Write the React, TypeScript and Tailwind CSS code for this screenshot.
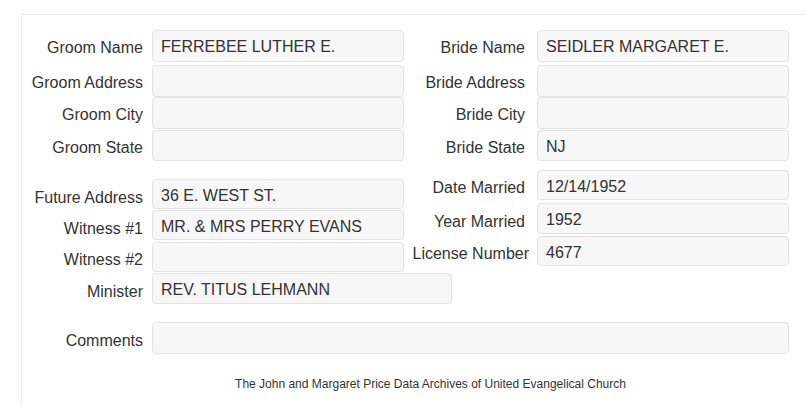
import React from "react";

// Marriage record detail form (read-only view)

interface FieldProps {
  label: string;
  value?: string;
  gap?: string;
  inputWidth?: string;
  height?: string;
  className?: string;
  labelClass?: string;
  valueClass?: string;
}

function Field({
  label,
  value = "",
  gap = "gap-[9px]",
  inputWidth = "w-[252px]",
  height = "h-[32px]",
  className = "",
  labelClass = "w-[121px] pt-[4px]",
  valueClass = "pt-[2px]",
}: FieldProps) {
  return (
    <div className={`flex items-center ${gap} ${className}`}>
      <div className={`shrink-0 text-right whitespace-nowrap ${labelClass}`}>{label}</div>
      <div
        className={`${inputWidth} ${height} ${valueClass} shrink-0 flex items-center px-[8px] rounded-[4px] border border-[#e3e3e3] bg-[#f7f7f7] whitespace-nowrap`}
      >
        {value}
      </div>
    </div>
  );
}

export default function App() {
  return (
    <div
      className="w-[805px] h-[405px] overflow-hidden bg-white text-[16px] leading-[20px] text-[#333]"
      style={{ fontFamily: '"Liberation Sans", Arial, sans-serif' }}
    >
      <div className="ml-[21px] mt-[14px] w-[818px] h-[400px] border-l border-t border-[#e8e8e8] pt-[15px]">
        {/* Groom / Bride */}
        <div className="flex">
          <div className="w-[382px] flex flex-col">
            <Field label="Groom Name" value="FERREBEE LUTHER E." />
            <Field label="Groom Address" className="mt-[3px]" />
            <Field label="Groom City" />
            <Field label="Groom State" className="mt-[1px]" height="h-[31px]" />
          </div>
          <div className="flex flex-col">
            <Field label="Bride Name" value="SEIDLER MARGARET E." gap="gap-[12px]" />
            <Field label="Bride Address" gap="gap-[12px]" className="mt-[3px]" />
            <Field label="Bride City" gap="gap-[12px]" />
            <Field label="Bride State" value="NJ" gap="gap-[12px]" className="mt-[1px]" height="h-[31px]" />
          </div>
        </div>

        {/* Witnesses / Marriage details */}
        <div className="flex">
          <div className="w-[382px] flex flex-col pt-[18px]">
            <Field
              label="Future Address"
              value="36 E. WEST ST."
              height="h-[30px]"
              labelClass="w-[121px] pt-[7px]"
              valueClass="pt-[3px]"
            />
            <Field
              label="Witness #1"
              value="MR. & MRS PERRY EVANS"
              height="h-[30px]"
              className="mt-[1px]"
              labelClass="w-[121px] pt-[7px]"
              valueClass="pt-[3px]"
            />
            <Field
              label="Witness #2"
              height="h-[30px]"
              className="mt-[2px]"
              labelClass="w-[121px] pt-[5px]"
              valueClass="pt-[3px]"
            />
            <Field
              label="Minister"
              value="REV. TITUS LEHMANN"
              inputWidth="w-[300px]"
              height="h-[31px]"
              className="mt-[1px]"
              labelClass="w-[121px] pt-[6px]"
              valueClass="pt-[3px]"
            />
          </div>
          <div className="flex flex-col pt-[9px]">
            <Field
              label="Date Married"
              value="12/14/1952"
              gap="gap-[12px]"
              height="h-[30px]"
              labelClass="w-[121px] pt-[5px]"
              valueClass="pt-[3px]"
            />
            <Field
              label="Year Married"
              value="1952"
              gap="gap-[12px]"
              height="h-[31px]"
              className="mt-[3px]"
              labelClass="w-[121px] pt-[7px]"
              valueClass="pt-[3px]"
            />
            <Field
              label="License Number"
              value="4677"
              gap="gap-[8px]"
              height="h-[30px]"
              className="mt-[2px]"
              labelClass="w-[125px] pt-[6px]"
              valueClass="pt-[3px]"
            />
          </div>
        </div>

        {/* Comments */}
        <Field
          label="Comments"
          inputWidth="w-[637px]"
          className="mt-[18px]"
          labelClass="w-[121px] pt-[5px]"
        />

        <div className="mt-[23px] text-center text-[12px] leading-[14px]">
          The John and Margaret Price Data Archives of United Evangelical Church
        </div>
      </div>
    </div>
  );
}
